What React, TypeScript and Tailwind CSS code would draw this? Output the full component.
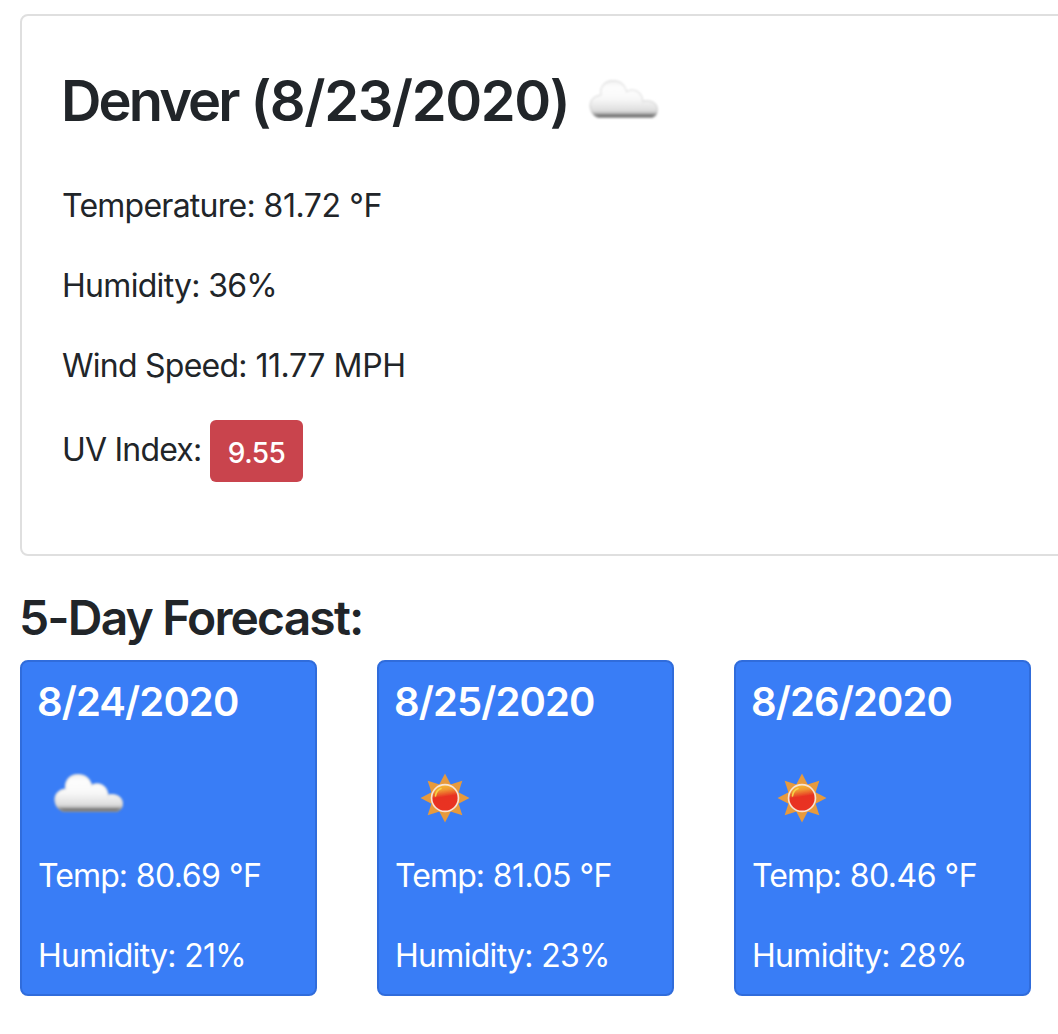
const days = [
  { date: "8/24/2020", sunny: false, temp: "80.69", humidity: 21 },
  { date: "8/25/2020", sunny: true, temp: "81.05", humidity: 23 },
  { date: "8/26/2020", sunny: true, temp: "80.46", humidity: 28 },
];

const cloudPath =
  "M25.5 64C20 62.5 16.5 57 16.5 51.5C16.5 46 20.5 41.5 27 40.5C26 32 32 26 40 26C47 26 52 30 54 36.5C61 33 69.5 37 70.5 46.5C78 44.5 85 49 85 55.5C85 59.5 82.5 63 79 64Z";

function Cloud({ id }: { id: string }) {
  return (
    <svg width="100" height="100" viewBox="0 0 100 100" className="block shrink-0">
      <defs>
        <linearGradient id={id + "-fill"} x1="0" y1="26" x2="0" y2="64" gradientUnits="userSpaceOnUse">
          <stop offset="0" stopColor="#f1f1f1" />
          <stop offset=".2" stopColor="#fdfdfd" />
          <stop offset=".5" stopColor="#f8f8f8" />
          <stop offset=".8" stopColor="#dedede" />
          <stop offset=".87" stopColor="#c0c0c0" />
          <stop offset=".92" stopColor="#777" />
          <stop offset="1" stopColor="#6c6c6c" />
        </linearGradient>
        <filter id={id + "-soft"} x="-10%" y="-10%" width="120%" height="120%">
          <feGaussianBlur stdDeviation=".9" />
        </filter>
        <clipPath id={id + "-clip"}>
          <path d={cloudPath} />
        </clipPath>
      </defs>
      <g filter={`url(#${id}-soft)`}>
        <path d={cloudPath} fill={`url(#${id}-fill)`} />
        <path d={cloudPath} fill="none" stroke="#c9c9c9" strokeOpacity=".4" strokeWidth="3" clipPath={`url(#${id}-clip)`} />
      </g>
    </svg>
  );
}

function Sun({ id }: { id: string }) {
  return (
    <svg width="100" height="100" viewBox="-50 -50 100 100" className="block shrink-0">
      <defs>
        <linearGradient id={id + "-fill"} x1=".4" y1="0" x2=".55" y2="1">
          <stop offset="0" stopColor="#f5b731" />
          <stop offset=".18" stopColor="#f09a32" />
          <stop offset=".35" stopColor="#eb5a2a" />
          <stop offset=".45" stopColor="#e83223" />
          <stop offset="1" stopColor="#e93324" />
        </linearGradient>
        <filter id={id + "-soft"} x="-10%" y="-10%" width="120%" height="120%">
          <feGaussianBlur stdDeviation=".75" />
        </filter>
      </defs>
      <g filter={`url(#${id}-soft)`}>
        {[0, 45, 90, 135, 180, 225, 270, 315].map((a) => (
          <path key={a} d="M-6.5 -12L0 -24.5L6.5 -12Z" fill="#e79a3c" transform={`rotate(${a})`} />
        ))}
        <circle r="14.3" fill="#f8e4d4" />
        <circle r="12.6" fill={`url(#${id}-fill)`} />
        <path d="M-9.5 -2C-9 -6 -7 -8.5 -4 -9.5" fill="none" stroke="#f6d447" strokeWidth="1.6" strokeLinecap="round" />
      </g>
    </svg>
  );
}

export default function App() {
  return (
    <main className="h-[1034px] w-full overflow-hidden bg-white pl-5 pt-3.5 font-[Inter,sans-serif] text-[32px] leading-[48px] text-[#212529]">
      <section className="h-[542px] w-[1200px] rounded-lg border-2 border-[#dfdfdf] px-10 pt-[38px]">
        <div className="flex h-[100px] items-center">
          <h1 className="w-[511px] shrink-0 whitespace-nowrap pb-[6px] text-[56px] font-semibold tracking-[-1.4px]">
            <span className="-ml-px tracking-[-2.9px]">Denver</span> (8/23/2020)
          </h1>
          <Cloud id="current" />
        </div>
        <p className="mt-7 tracking-[-0.4px]"><span className="tracking-[-0.75px]">Temperature:</span> 81.72 °F</p>
        <p className="mt-8 tracking-[-0.7px]">Humidity: 36%</p>
        <p className="mt-8 tracking-[-0.4px]"><span className="tracking-[-0.75px]">Wind Speed:</span> 11.77 MPH</p>
        <div className="mt-[30px] flex">
          <span className="w-[148px] pt-[6px] tracking-[-0.8px]">UV Index:</span>
          <span className="flex h-[62px] w-[93px] items-center justify-center rounded-md bg-[#c9444d] pt-[3px] text-[28px] font-medium tracking-[-0.6px] text-white">9.55</span>
        </div>
      </section>
      <h2 className="-ml-px mt-8 h-[72px] text-[48px] font-semibold leading-[60px] tracking-[-1.85px]">5-Day Forecast:</h2>
      <div className="flex gap-[60px]">
        {days.map((day) => (
          <article key={day.date} className="h-[336px] w-[297px] shrink-0 rounded-lg border-2 border-[#306cdb] bg-[#397df6] px-4 pt-4 text-white">
            <h3 className="-ml-px text-[40px] font-semibold leading-[48px] tracking-[-0.9px]">{day.date}</h3>
            <div className="mb-1 mt-[22px]">{day.sunny ? <Sun id={day.date} /> : <Cloud id={day.date} />}</div>
            <p className="tracking-[-0.5px]"><span className="tracking-[-0.9px]">Temp:</span> {day.temp} °F</p>
            <p className="mt-8 tracking-[-0.7px]">Humidity: {day.humidity}%</p>
          </article>
        ))}
      </div>
    </main>
  );
}
